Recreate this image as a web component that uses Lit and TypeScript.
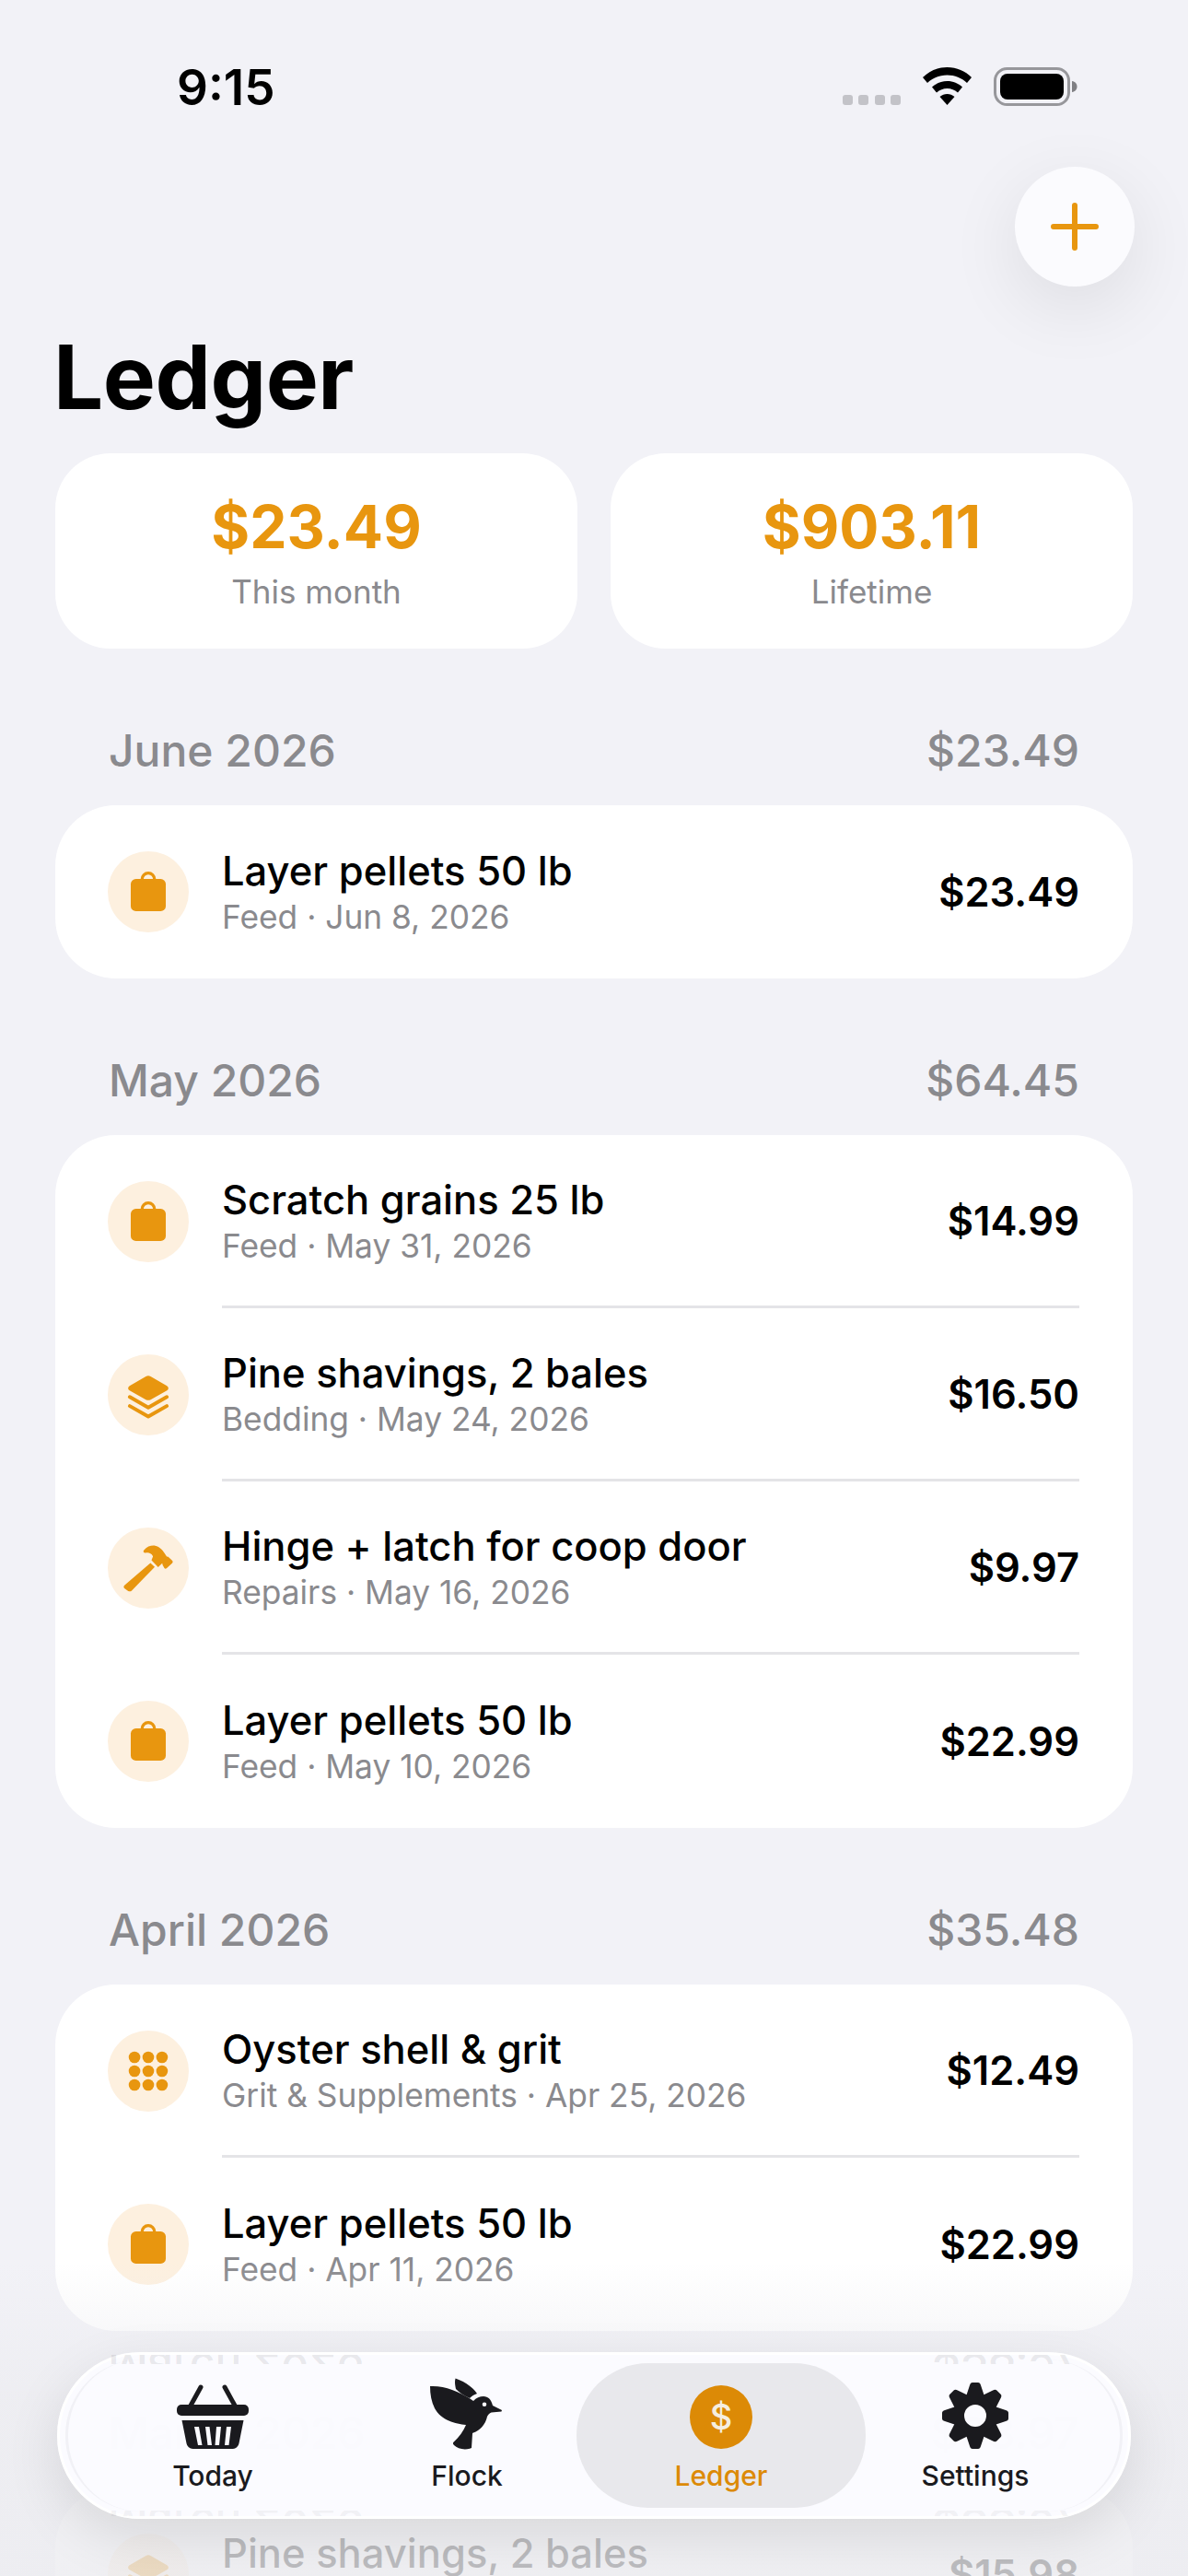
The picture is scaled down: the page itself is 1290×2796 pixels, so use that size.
import { LitElement, html, css, svg } from 'lit';
import { customElement } from 'lit/decorators.js';

type Entry = { icon: string; name: string; meta: string; amount: string };
type Group = { month: string; total: string; entries: Entry[] };

const groups: Group[] = [
  {
    month: 'June 2026',
    total: '$23.49',
    entries: [{ icon: 'bag', name: 'Layer pellets 50 lb', meta: 'Feed · Jun 8, 2026', amount: '$23.49' }],
  },
  {
    month: 'May 2026',
    total: '$64.45',
    entries: [
      { icon: 'bag', name: 'Scratch grains 25 lb', meta: 'Feed · May 31, 2026', amount: '$14.99' },
      { icon: 'layers', name: 'Pine shavings, 2 bales', meta: 'Bedding · May 24, 2026', amount: '$16.50' },
      { icon: 'hammer', name: 'Hinge + latch for coop door', meta: 'Repairs · May 16, 2026', amount: '$9.97' },
      { icon: 'bag', name: 'Layer pellets 50 lb', meta: 'Feed · May 10, 2026', amount: '$22.99' },
    ],
  },
  {
    month: 'April 2026',
    total: '$35.48',
    entries: [
      { icon: 'dots', name: 'Oyster shell & grit', meta: 'Grit & Supplements · Apr 25, 2026', amount: '$12.49' },
      { icon: 'bag', name: 'Layer pellets 50 lb', meta: 'Feed · Apr 11, 2026', amount: '$22.99' },
    ],
  },
  {
    month: 'March 2026',
    total: '$38.97',
    entries: [
      { icon: 'layers', name: 'Pine shavings, 2 bales', meta: 'Bedding · Mar 21, 2026', amount: '$15.98' },
    ],
  },
];

const icons: Record<string, unknown> = {
  bag: svg`<path d="M9.100 7V6.200a2.900 2.900 0 0 1 5.800 0V7" fill="none" stroke="currentColor" stroke-width="1.400"/><rect x="3.850" y="6" width="16.300" height="15" rx="2.400"/>`,
  layers: svg`<path d="M10.900 3.400a2.200 2.200 0 0 1 2.200 0l7.600 4.400c.9.500.9 1.700 0 2.200l-7.600 4.200a2.200 2.200 0 0 1-2.200 0L3.300 10c-.9-.5-.9-1.700 0-2.200z"/>
    <path d="M3.400 13l8.600 4.900 8.600-4.900M3.400 17.200l8.600 4.900 8.600-4.900" fill="none" stroke="currentColor" stroke-width="1.700" stroke-linecap="round" stroke-linejoin="round"/>`,
  hammer: svg`<path d="M13 9.600L.9 20c-.4.400-.4 1 0 1.400l1.800 1.300c.6.300 1.200.2 1.600-.2L15 11.500z"/>
    <path d="M9.900 3.700C11.500 1.800 13.500 1.400 15.200 1.600c2.100.3 4 2.600 4.900 4.300l.5.700.7.200 1.900 1.800c.3.400.3.700-.1 1.100l-2.600 2.400c-.4.300-.7.300-1-.1l-.8-1.400-.2-.9-1.900 1.900-3.100-3.200.7-1.900c-.8-1.400-1.900-1.800-3.400-1.600-.9.100-1.300-.6-.9-1.200z"/>`,
  dots: svg`${[5.6, 12, 18.4].flatMap((cy) =>
    [5.6, 12, 18.4].map((cx) => svg`<circle cx=${cx} cy=${cy} r="2.700"/>`),
  )}`,
};

@customElement('app-root')
export class AppRoot extends LitElement {
  static styles = css`
    :host {
      display: block;
      position: relative;
      width: 1290px;
      height: 2796px;
      overflow: hidden;
      background: #f2f2f7;
      font-family: Inter, 'Liberation Sans', sans-serif;
      color: #000;
    }

    .status {
      height: 181px;
      display: flex;
      justify-content: space-between;
      align-items: flex-start;
      padding: 0 119px 0 192px;
    }

    .time {
      margin-top: 65px;
      font-size: 53px;
      line-height: 60px;
      font-weight: 600;
    }

    .status-icons {
      margin-top: 73px;
      display: flex;
      align-items: flex-start;
    }

    .signal {
      display: flex;
      gap: 6.500px;
      margin: 30px 22px 0 0;
    }

    .signal i {
      width: 11px;
      height: 11px;
      border-radius: 3px;
      background: #c3c3c8;
    }

    .wifi {
      margin-right: 22px;
    }

    .add {
      display: flex;
      justify-content: flex-end;
      padding-right: 58px;
      height: 130px;
    }

    .add-button {
      width: 130px;
      height: 130px;
      border-radius: 50%;
      background: #fbfbfe;
      box-shadow: 0 22px 80px rgba(0, 0, 0, 0.09);
      display: flex;
      align-items: center;
      justify-content: center;
      color: #e8960f;
    }

    h1 {
      margin: 0;
      padding: 44px 58px 0;
      font-size: 96px;
      line-height: 108px;
      font-weight: 700;
      letter-spacing: -0.5px;
    }

    .stats {
      margin: 29px 60px 0;
      display: grid;
      grid-template-columns: 1fr 1fr;
      gap: 36px;
    }

    .stat {
      height: 212px;
      box-sizing: border-box;
      padding-top: 40px;
      border-radius: 60px;
      background: #fff;
      text-align: center;
    }

    .stat-value {
      font-size: 64px;
      line-height: 80px;
      font-weight: 700;
      color: #e8960f;
    }

    .stat-label {
      margin-top: 8px;
      font-size: 35px;
      line-height: 44px;
      color: #8a8a8e;
    }

    .group-head {
      display: flex;
      justify-content: space-between;
      align-items: center;
      padding: 0 58px;
      height: 60px;
      margin: 80px 60px 30px;
      font-size: 48px;
      font-weight: 500;
      color: #8a8a8e;
    }

    .card {
      margin: 0 60px;
      border-radius: 66px;
      background: #fff;
    }

    .row {
      height: 188px;
      box-sizing: border-box;
      display: flex;
      align-items: center;
      padding: 0 58px 0 57px;
    }

    .badge {
      width: 88px;
      height: 88px;
      flex: none;
      border-radius: 50%;
      background: #fdf0df;
      color: #e8960f;
      display: flex;
      align-items: center;
      justify-content: center;
      margin-right: 36px;
    }

    .body {
      flex: 1;
      align-self: stretch;
      display: flex;
      align-items: center;
      justify-content: space-between;
      border-bottom: 3px solid #e4e4e7;
    }

    .row:last-child .body {
      border-bottom: 0;
    }

    .name {
      font-size: 43.500px;
      line-height: 54px;
      font-weight: 500;
    }

    .meta {
      margin-top: 2px;
      font-size: 35.300px;
      line-height: 44px;
      color: #8a8a8e;
    }

    .amount {
      font-size: 43.500px;
      font-weight: 600;
    }

    .fade {
      position: absolute;
      left: 0;
      right: 0;
      bottom: 0;
      height: 340px;
      pointer-events: none;
      background: linear-gradient(to bottom, rgba(236, 236, 240, 0), rgba(236, 236, 240, 0.75) 45%, rgba(236, 236, 240, 0.8));
    }

    .tabbar {
      position: absolute;
      left: 62px;
      top: 2553px;
      width: 1166px;
      height: 181px;
      box-sizing: border-box;
      border: 3px solid #fff;
      border-radius: 90px;
      background: rgba(251, 251, 255, 0.96);
      box-shadow: 0 20px 60px rgba(0, 0, 0, 0.1);
      display: grid;
      grid-template-columns: repeat(4, 276px);
      padding: 9px 28px;
      color: #1a1a1e;
    }

    /* refraction lines at the two round ends of the glass bar */
    .tabbar::before,
    .tabbar::after {
      content: '';
      position: absolute;
      top: 5px;
      bottom: 5px;
      width: 90px;
      box-sizing: border-box;
    }

    .tabbar::before {
      left: 6px;
      border-left: 3px solid #f1f1f6;
      border-radius: 82px 0 0 82px;
    }

    .tabbar::after {
      right: 6px;
      border-right: 3px solid #f1f1f6;
      border-radius: 0 82px 82px 0;
    }

    .sliver {
      position: absolute;
      left: 0;
      right: 0;
      height: 10px;
      overflow: hidden;
    }

    .sliver.top {
      top: 0;
    }

    .sliver.bottom {
      bottom: 0;
      height: 6px;
      opacity: 0.5;
    }

    .sliver div {
      display: flex;
      justify-content: space-between;
      padding: 0 52px;
      margin-top: -15px;
      font-size: 48px;
      line-height: 60px;
      font-weight: 500;
      color: rgba(60, 60, 67, 0.1);
      transform: scaleY(-1);
    }

    .tab {
      position: relative;
      z-index: 1;
      display: flex;
      flex-direction: column;
      align-items: center;
      justify-content: flex-end;
      padding-bottom: 17px;
      font-size: 30px;
      line-height: 36px;
      font-weight: 500;
      border-radius: 78px;
    }

    .tab svg {
      margin-bottom: 11px;
    }

    .tab svg.bird {
      margin-bottom: 2px;
    }

    .tab.active {
      margin: 0 -19px;
      background: #e8e8ec;
      color: #dc8a06;
    }
  `;

  render() {
    return html`
      <div class="status">
        <div class="time">9:15</div>
        <div class="status-icons">
          <div class="signal"><i></i><i></i><i></i><i></i></div>
          <svg class="wifi" width="57" height="42" viewBox="0 0 56 42">
            <path d="M28 0c10.500 0 19.500 4 26.500 11l-5 6c-6-5.500-13-8.500-21.500-8.500S12.500 11.500 6.500 17l-5-6C8.500 4 17.500 0 28 0z"/>
            <path d="M28 15c6.500 0 12 2.500 16.500 6.500l-5 6C36 24.500 32.500 23 28 23s-8 1.500-11.500 4.500l-5-6C16 17.500 21.500 15 28 15z"/>
            <path d="M28 29c3 0 5.500 1 8 3L28 41l-8-9c2.500-2 5-3 8-3z"/>
          </svg>
          <svg width="92" height="42" viewBox="0 0 92 42">
            <rect x="1.500" y="1.500" width="80" height="39" rx="13" fill="none" stroke="#97979b" stroke-width="3"/>
            <rect x="7" y="7" width="69" height="28" rx="8"/>
            <path d="M85 15c3.500.5 5.500 3 5.500 6s-2 5.500-5.500 6z" fill="#808084"/>
          </svg>
        </div>
      </div>

      <div class="add">
        <div class="add-button">
          <svg width="52" height="52" viewBox="0 0 52 52" fill="none" stroke="currentColor" stroke-width="6" stroke-linecap="round">
            <path d="M26 3v46M3 26h46"/>
          </svg>
        </div>
      </div>

      <h1>Ledger</h1>

      <div class="stats">
        <div class="stat">
          <div class="stat-value">$23.49</div>
          <div class="stat-label">This month</div>
        </div>
        <div class="stat">
          <div class="stat-value">$903.11</div>
          <div class="stat-label">Lifetime</div>
        </div>
      </div>

      ${groups.map(
        (group) => html`
          <div class="group-head"><span>${group.month}</span><span>${group.total}</span></div>
          <div class="card">
            ${group.entries.map(
              (entry) => html`
                <div class="row">
                  <div class="badge">
                    <svg width="56" height="56" viewBox="0 0 24 24" fill="currentColor">${icons[entry.icon]}</svg>
                  </div>
                  <div class="body">
                    <div>
                      <div class="name">${entry.name}</div>
                      <div class="meta">${entry.meta}</div>
                    </div>
                    <div class="amount">${entry.amount}</div>
                  </div>
                </div>
              `,
            )}
          </div>
        `,
      )}

      <div class="fade"></div>

      <nav class="tabbar">
        <div class="sliver top" aria-hidden="true"><div><span>March 2026</span><span>$38.97</span></div></div>
        <div class="sliver bottom" aria-hidden="true"><div><span>March 2026</span><span>$38.97</span></div></div>
        <div class="tab">
          <svg width="78" height="71" viewBox="0 0 78 71" fill="currentColor">
            <path d="M26 4L15 24M52 4l11 20" fill="none" stroke="currentColor" stroke-width="5" stroke-linecap="round"/>
            <rect x="0" y="23" width="78" height="12" rx="5"/>
            <path fill-rule="evenodd" d="M5.500 40h67l-5 25a7 7 0 0 1-7 6H17.500a7 7 0 0 1-7-6zM19 47h5l3.500 20H23zM31 47h4.500l2.500 20h-4.500zM43 47h5l-2 20h-4.500zM54 47h5l-2.500 20H52z"/>
          </svg>
          Today
        </div>
        <div class="tab">
          <svg class="bird" width="80" height="88" viewBox="0 0 80 88" fill="currentColor">
            <path d="M27.600 2.500c10 3.500 18.500 9.500 23.400 16.500-3 1-6 2.800-8 5-6.500-3-12-6.500-15-10-.9-4.500-1.500-8 -.4-11.500z"/>
            <path fill-rule="evenodd" d="M0 11c17-1 34 7 47 16 3-3.500 7-5 11-5 5 0 8.500 3.500 10 10l10 5-.5 1.500-11 1c-2 1-3.500 2-4.500 4.500-2 9-8 15-15 17.500-1 .5-1 .5-1 1l-1 15.500c-7 3-15 1-19-3-1.200-1-1.400-2.500-.5-3.300C32 66 36 60 39 53 28 52 12 48 5 35 1.500 28 0 20 0 11zM59 28.500a2.300 2.300 0 1 0 0 4.600 2.300 2.300 0 0 0 0-4.600z"/>
          </svg>
          Flock
        </div>
        <div class="tab active">
          <svg width="68" height="69" viewBox="0 0 68 69">
            <ellipse cx="34" cy="34.500" rx="34" ry="34.500" fill="#dc8a06"/>
            <text x="34" y="48" text-anchor="middle" font-size="38" font-family="Inter, sans-serif" fill="#f5eee0">$</text>
          </svg>
          Ledger
        </div>
        <div class="tab">
          <svg width="72" height="72" viewBox="-36 -36 72 72" fill="currentColor">
            <circle r="18" fill="none" stroke="currentColor" stroke-width="12"/>
            ${[0, 45, 90, 135, 180, 225, 270, 315].map(
              (angle) => svg`<path transform="rotate(${angle})" d="M-10-21l4-12c.5-2 1.500-3 3-3h6c1.500 0 2.500 1 3 3l4 12z"/>`,
            )}
          </svg>
          Settings
        </div>
      </nav>
    `;
  }
}
